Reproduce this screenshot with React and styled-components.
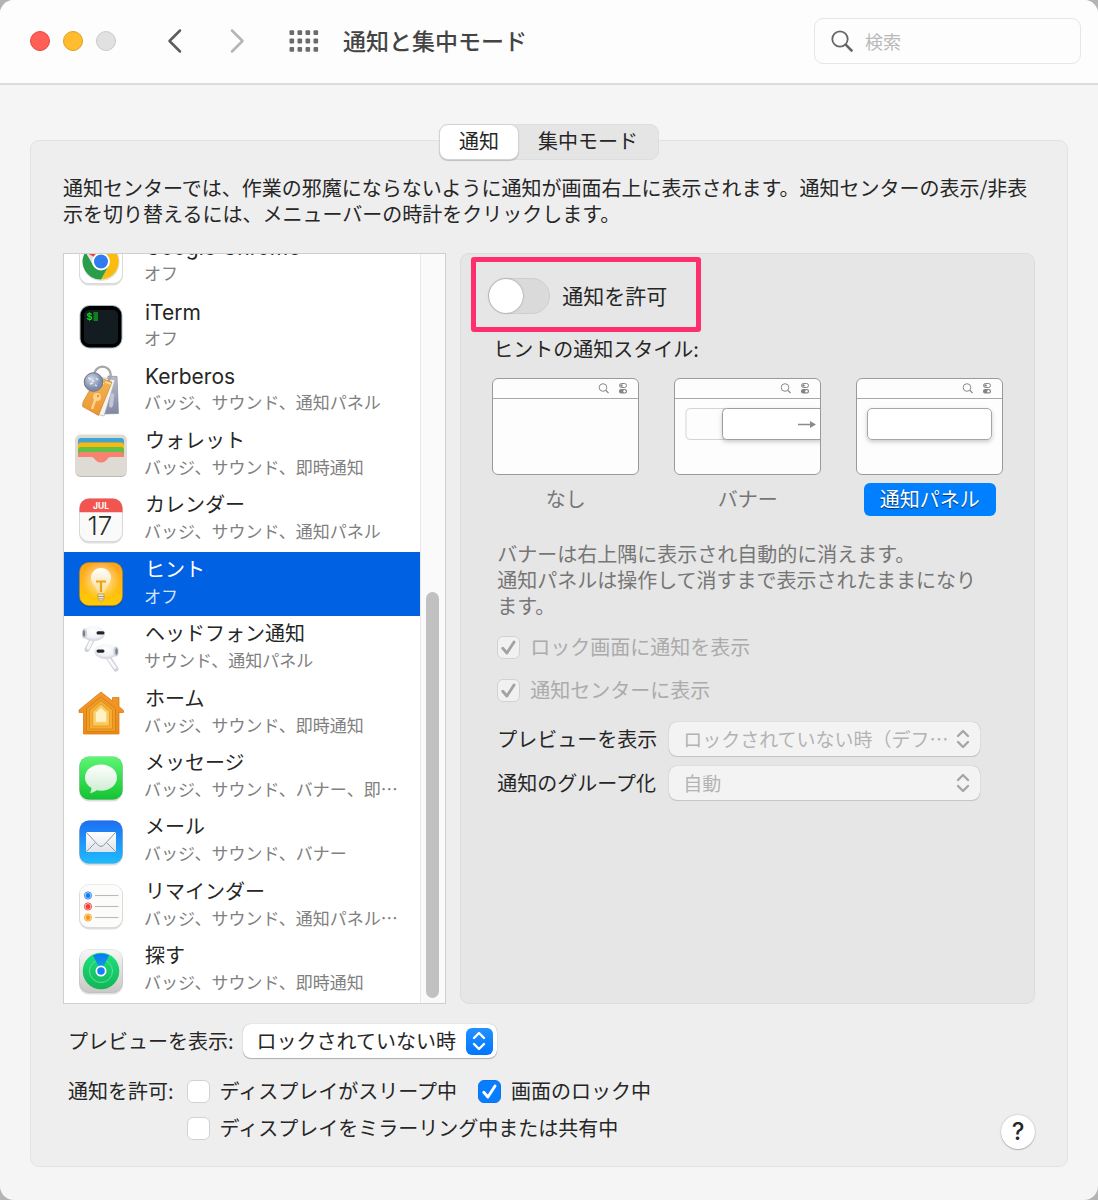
import React from 'react'
import styled, { createGlobalStyle } from 'styled-components'

const apps = [
  { name: 'Google Chrome', detail: 'オフ', icon: <ChromeIcon />, latin: true },
  { name: 'iTerm', detail: 'オフ', icon: <ItermIcon />, latin: true },
  { name: 'Kerberos', detail: 'バッジ、サウンド、通知パネル', icon: <KerberosIcon />, latin: true },
  { name: 'ウォレット', detail: 'バッジ、サウンド、即時通知', icon: <WalletIcon /> },
  { name: 'カレンダー', detail: 'バッジ、サウンド、通知パネル', icon: <CalendarIcon /> },
  { name: 'ヒント', detail: 'オフ', icon: <TipsIcon />, selected: true },
  { name: 'ヘッドフォン通知', detail: 'サウンド、通知パネル', icon: <HeadphoneIcon /> },
  { name: 'ホーム', detail: 'バッジ、サウンド、即時通知', icon: <HomeIcon /> },
  { name: 'メッセージ', detail: 'バッジ、サウンド、バナー、即…', icon: <MessagesIcon /> },
  { name: 'メール', detail: 'バッジ、サウンド、バナー', icon: <MailIcon /> },
  { name: 'リマインダー', detail: 'バッジ、サウンド、通知パネル…', icon: <RemindersIcon /> },
  { name: '探す', detail: 'バッジ、サウンド、即時通知', icon: <FindIcon /> },
]

const alertStyles = [
  { id: 'none', label: 'なし' },
  { id: 'banner', label: 'バナー' },
  { id: 'alert', label: '通知パネル' },
]

function App() {
  return (
    <Desktop>
      <GlobalStyle />
      <Window>
        <TitleBar>
          <Lights>
            <Light $color="#ff5f57" $edge="#e2493f" aria-label="閉じる" />
            <Light $color="#febc2e" $edge="#e0a11d" aria-label="しまう" />
            <Light $color="#e1e1e1" $edge="#cbcbcb" aria-label="拡大" disabled />
          </Lights>
          <Nav>
            <IconButton aria-label="戻る">
              <svg width="16" height="26" viewBox="0 0 16 26">
                <path d="M13 2.500L2.500 13L13 23.500" stroke="#5c5c5c" />
              </svg>
            </IconButton>
            <IconButton aria-label="進む" disabled>
              <svg width="16" height="26" viewBox="0 0 16 26">
                <path d="M3 2.500L13.500 13L3 23.500" stroke="#b5b5b5" />
              </svg>
            </IconButton>
          </Nav>
          <IconButton aria-label="すべてを表示">
            <svg width="30" height="22" viewBox="0 0 30 22">
              {[0, 8.3, 16.6].map(y =>
                [0.5, 8.5, 16.5, 24.5].map(x => (
                  <rect key={`${x}-${y}`} x={x} y={y + 0.3} width="4.600" height="4.800" rx="1" fill="#6b6b6b" />
                ))
              )}
            </svg>
          </IconButton>
          <Heading>通知と集中モード</Heading>
          <Search>
            <svg width="22" height="22" viewBox="0 0 22 22">
              <circle cx="9" cy="9" r="7.700" />
              <path d="M14.700 14.700L20.500 20.500" strokeWidth="2.600" />
            </svg>
            <input type="search" placeholder="検索" aria-label="検索" />
          </Search>
        </TitleBar>

        <Content>
          <Tabs role="tablist">
            <Tab role="tab" aria-selected="true" $active>通知</Tab>
            <Tab role="tab" aria-selected="false">集中モード</Tab>
          </Tabs>

          <Panel>
            <Intro>
              通知センターでは、作業の邪魔にならないように通知が画面右上に表示されます。通知センターの表示/非表示を切り替えるには、メニューバーの時計をクリックします。
            </Intro>

            <Columns>
              <ListFrame>
                <ListView>
                  <AppList>
                    {apps.map(app => (
                      <li key={app.name}>
                        <AppRow $selected={app.selected}>
                          {app.icon}
                          <AppText>
                            <AppName $latin={app.latin}>{app.name}</AppName>
                            <AppDetail $selected={app.selected}>{app.detail}</AppDetail>
                          </AppText>
                        </AppRow>
                      </li>
                    ))}
                  </AppList>
                </ListView>
                <ScrollTrack>
                  <ScrollThumb />
                </ScrollTrack>
              </ListFrame>

              <Settings>
                <Highlight>
                  <Switch type="checkbox" role="switch" id="allow" />
                  <label htmlFor="allow">通知を許可</label>
                </Highlight>

                <Styles>
                  <legend>ヒントの通知スタイル:</legend>
                  <StyleOptions>
                    {alertStyles.map(item => (
                      <StyleOption key={item.id}>
                        <input type="radio" name="style" defaultChecked={item.id === 'alert'} />
                        <StylePreview kind={item.id} />
                        <span>{item.label}</span>
                      </StyleOption>
                    ))}
                  </StyleOptions>
                </Styles>

                <Options>
                  <Note>
                    バナーは右上隅に表示され自動的に消えます。
                    <br />
                    通知パネルは操作して消すまで表示されたままになります。
                  </Note>
                  <Checks>
                    <Check label="ロック画面に通知を表示" checked disabled />
                    <Check label="通知センターに表示" checked disabled />
                  </Checks>
                  <Fields>
                    <label htmlFor="app-preview">プレビューを表示</label>
                    <Popup id="app-preview" value="ロックされていない時（デフ…" disabled />
                    <label htmlFor="grouping">通知のグループ化</label>
                    <Popup id="grouping" value="自動" disabled />
                  </Fields>
                </Options>
              </Settings>
            </Columns>

            <Footer>
              <FooterRow>
                <label htmlFor="preview">プレビューを表示:</label>
                <Popup id="preview" value="ロックされていない時" />
              </FooterRow>
              <AllowRow>
                <span>通知を許可:</span>
                <AllowChecks>
                  <div>
                    <Check label="ディスプレイがスリープ中" />
                    <Check label="画面のロック中" checked />
                  </div>
                  <div>
                    <Check label="ディスプレイをミラーリング中または共有中" />
                  </div>
                </AllowChecks>
                <Help aria-label="ヘルプ">?</Help>
              </AllowRow>
            </Footer>
          </Panel>
        </Content>
      </Window>
    </Desktop>
  )
}

export default App

function Check({ label, checked, disabled }) {
  return (
    <CheckLabel $disabled={disabled}>
      <CheckMark $on={checked && !disabled} $disabled={disabled}>
        <input type="checkbox" defaultChecked={checked} disabled={disabled} />
        {checked && (
          <svg width="23" height="23" viewBox="0 0 24 24">
            <path d="M6 12.800L10.300 17.800L17.800 6.300" stroke={disabled ? '#a3a3a3' : '#fff'} />
          </svg>
        )}
      </CheckMark>
      {label}
    </CheckLabel>
  )
}

function Popup({ id, value, disabled }) {
  return (
    <PopupBox $disabled={disabled}>
      <select id={id} disabled={disabled}>
        <option>{value}</option>
      </select>
      <Arrows $disabled={disabled}>
        <svg width="14" height="20" viewBox="0 0 14 20">
          <path d="M2 7L7 2L12 7M2 13L7 18L12 13" />
        </svg>
      </Arrows>
    </PopupBox>
  )
}

function StylePreview({ kind }) {
  return (
    <svg width="147" height="97" viewBox="0 0 147 97" fill="none">
      <defs>
        <filter id={`shade-${kind}`} x="-10%" y="-20%" width="120%" height="160%">
          <feDropShadow dx="0" dy="2" stdDeviation="2" floodOpacity="0.2" />
        </filter>
        <clipPath id={`clip-${kind}`}>
          <rect x="1" y="1" width="145" height="95" rx="5" />
        </clipPath>
      </defs>
      <rect x="0.500" y="0.500" width="146" height="96" rx="5.500" fill="#fdfdfd" stroke="#9a9a9a" />
      <path d="M1 20.500H146" stroke="#a8a8a8" />
      <circle cx="111" cy="9.500" r="3.800" stroke="#8b8b8b" />
      <path d="M114 12.500L116.500 15" stroke="#8b8b8b" strokeWidth="1.300" />
      <rect x="127.500" y="5.500" width="7" height="4" rx="2" stroke="#858585" />
      <circle cx="129.500" cy="7.500" r="1.200" fill="#858585" />
      <rect x="127" y="11" width="8" height="4.500" rx="2" fill="#858585" />
      <circle cx="132.500" cy="13.200" r="1.200" fill="#fff" />
      {kind === 'banner' && (
        <g clipPath="url(#clip-banner)">
          <rect x="12" y="30.500" width="60" height="31" rx="4" fill="#fdfdfd" stroke="#d4d4d4" />
          <rect x="48.500" y="30.500" width="120" height="31" rx="4" fill="#fff" stroke="#9e9e9e" filter="url(#shade-banner)" />
          <path d="M124 46.500H137" stroke="#8b8b8b" strokeWidth="1.300" />
          <path d="M136 43L142 46.500L136 50Z" fill="#8b8b8b" />
        </g>
      )}
      {kind === 'alert' && (
        <rect x="11.500" y="30.500" width="124" height="31" rx="4.500" fill="#fff" stroke="#a6a6a6" filter="url(#shade-alert)" />
      )}
    </svg>
  )
}

function AppIcon({ children }) {
  return (
    <svg width="52" height="54" viewBox="0 -1 52 54" fill="none" aria-hidden="true">
      {children}
    </svg>
  )
}

function Tile({ fill, edge = '#00000022' }) {
  return (
    <>
      <rect x="4" y="5.500" width="44" height="44" rx="10" fill="#000" opacity="0.130" />
      <rect x="4.500" y="4.500" width="43" height="43" rx="9.500" fill={fill} stroke={edge} strokeWidth="0.600" />
    </>
  )
}

function Gradient({ id, from, to }) {
  return (
    <linearGradient id={id} x1="0" y1="0" x2="0" y2="1">
      <stop stopColor={from} />
      <stop offset="1" stopColor={to} />
    </linearGradient>
  )
}

function ChromeIcon() {
  return (
    <AppIcon>
      <Tile fill="#fff" />
      <circle cx="26" cy="26.500" r="18.500" fill="#000" opacity="0.120" />
      <path d="M26 25L10.400 16A18 18 0 0 1 41.600 16Z" fill="#ea4335" />
      <path d="M26 17H41.600A18 18 0 0 1 26 43.500L33.800 29.500Z" fill="#fbbc12" />
      <path d="M18.200 29.500L10.400 16A18 18 0 0 0 26 43.500L33.800 29.500Z" fill="#2a9d48" />
      <circle cx="26" cy="25.500" r="9" fill="#fff" />
      <circle cx="26" cy="25.500" r="7" fill="#2f7bef" />
    </AppIcon>
  )
}

function ItermIcon() {
  return (
    <AppIcon>
      <rect x="4.500" y="4" width="43" height="43.500" rx="10" fill="#a9bcc2" />
      <rect x="5.500" y="5" width="41" height="41.500" rx="9" fill="#000" />
      <rect x="9" y="9" width="34" height="34" rx="5" fill="#131d21" />
      <text x="11.500" y="19" fontFamily="Liberation Mono" fontWeight="700" fontSize="10" fill="#19d526">$</text>
      <rect x="18.500" y="11" width="4.500" height="9" fill="#0d7f1d" />
    </AppIcon>
  )
}

function KerberosIcon() {
  return (
    <AppIcon>
      <defs>
        <Gradient id="kerb-card" from="#f2b654" to="#ee9530" />
        <Gradient id="kerb-back" from="#b7bccb" to="#8287a5" />
        <radialGradient id="kerb-ball" cx="0.400" cy="0.350">
          <stop stopColor="#d3dcea" />
          <stop offset="1" stopColor="#7e8cae" />
        </radialGradient>
      </defs>
      <path d="M33 11L42 11.500L43.500 48.500L27 49Z" fill="url(#kerb-back)" stroke="#7b7f96" strokeWidth="0.600" />
      <path d="M39 32a2.500 2.500 0 1 0-4 0l-1 9 2 2 2-2z" fill="#c3c6d4" />
      <path d="M25 12L40 15L29 51L21 49Z" fill="#f4f3ef" stroke="#aaa" strokeWidth="0.600" />
      <circle cx="27.500" cy="10" r="8.300" stroke="#a5a5aa" strokeWidth="2.200" />
      <path d="M22 12L37 17L23.500 50.500L7.500 41.500L8 37Z" fill="url(#kerb-card)" stroke="#c07a28" strokeWidth="0.600" />
      <path d="M29 19L22 15M30.500 17L36 19" stroke="#fbe1a5" strokeWidth="1.400" />
      <circle cx="22" cy="32" r="4" fill="#fbd391" />
      <circle cx="23" cy="31" r="1.200" fill="#e99333" />
      <path d="M20.500 34L17 44" stroke="#fbd391" strokeWidth="2.400" />
      <circle cx="18.500" cy="17" r="9.300" fill="url(#kerb-ball)" stroke="#707680" />
      <path d="M13 13l3 1M15 19l3-1M21 13l2 2M20 20l2 1M17 16h2" stroke="#fff" strokeWidth="1.600" opacity="0.700" />
    </AppIcon>
  )
}

function WalletIcon() {
  return (
    <AppIcon>
      <rect x="0.500" y="6" width="51" height="42" rx="5" fill="#bdbbb7" />
      <rect x="0.500" y="5.500" width="51" height="41.500" rx="5" fill="#dedbd4" />
      <path d="M3 12q0-3 3-3h40q3 0 3 3v9H3z" fill="#41a5d3" />
      <path d="M3 17q0-3.500 3-3.500h40q3 0 3 3.500v6H3z" fill="#fdb90b" />
      <path d="M3 21q0-3 3-3h40q3 0 3 3v5H3z" fill="#62c144" />
      <path d="M3 26q0-3 3-3h40q3 0 3 3v2H36c-4 0-4 5.500-10 5.500S20 28 16 28H3z" fill="#f78271" />
    </AppIcon>
  )
}

function CalendarIcon() {
  return (
    <AppIcon>
      <Tile fill="#fafafa" />
      <path d="M4.500 18.300V14A9.500 9.500 0 0 1 14 4.500H38A9.500 9.500 0 0 1 47.500 14V18.300Z" fill="#f2544f" />
      <text x="26" y="14.500" textAnchor="middle" fontFamily="Inter" fontWeight="700" fontSize="8.500" fill="#fff">JUL</text>
      <text x="25" y="40.500" textAnchor="middle" fontFamily="Inter" fontWeight="300" fontSize="26" fill="#2c2c2c">17</text>
    </AppIcon>
  )
}

function TipsIcon() {
  return (
    <AppIcon>
      <defs>
        <Gradient id="tips-bg" from="#ffa21f" to="#ffcc05" />
        <radialGradient id="tips-glow">
          <stop stopColor="#fff" stopOpacity="0.750" />
          <stop offset="1" stopColor="#fff" stopOpacity="0" />
        </radialGradient>
        <Gradient id="tips-bulb" from="#fff" to="#f8dd9a" />
      </defs>
      <Tile fill="url(#tips-bg)" edge="#c98700" />
      <circle cx="26" cy="22" r="19" fill="url(#tips-glow)" />
      <path d="M26 10C20 10 16 14.500 16 20C16 26 22 29 22.800 35H29.200C30 29 36 26 36 20C36 14.500 32 10 26 10Z" fill="url(#tips-bulb)" />
      <path d="M21 23.500H31M26 23.500V34" stroke="#eda20f" strokeWidth="2.200" />
      <path d="M23 36H29V40.500L27.500 43H24.500L23 40.500Z" fill="#eee5ce" stroke="#a98842" strokeWidth="0.600" />
      <path d="M23 38.500H29M23.500 40.800H28.500" stroke="#9e8555" strokeWidth="0.800" />
    </AppIcon>
  )
}

function HeadphoneIcon() {
  return (
    <AppIcon>
      <defs>
        <radialGradient id="pod" cx="0.500" cy="0.350" r="0.600">
          <stop stopColor="#fff" />
          <stop offset="0.700" stopColor="#f2f3f6" />
          <stop offset="1" stopColor="#d5d8df" />
        </radialGradient>
      </defs>
      <path d="M17.500 16L12 26.500" stroke="#cdd1d8" strokeWidth="5" strokeLinecap="round" />
      <path d="M17.800 15L13 25" stroke="#f7f8fa" strokeWidth="3" strokeLinecap="round" />
      <path d="M33 34L41 46" stroke="#cdd1d8" strokeWidth="5" strokeLinecap="round" />
      <path d="M32.500 34L40 44.500" stroke="#f7f8fa" strokeWidth="3" strokeLinecap="round" />
      <ellipse cx="18.500" cy="10.500" rx="11.500" ry="7.500" fill="url(#pod)" />
      <ellipse cx="9.500" cy="10.500" rx="2.600" ry="5" fill="#cfd3da" />
      <ellipse cx="9" cy="10.500" rx="1.200" ry="3.200" fill="#7a808c" />
      <rect x="21.500" y="8.300" width="8" height="3.200" rx="1.600" fill="#22252b" />
      <ellipse cx="31" cy="28.500" rx="11.500" ry="7.500" fill="url(#pod)" />
      <ellipse cx="41" cy="28.500" rx="2.600" ry="5" fill="#cfd3da" />
      <ellipse cx="41.500" cy="28.500" rx="1.200" ry="3.200" fill="#7a808c" />
      <rect x="21.500" y="26.500" width="8" height="3.200" rx="1.600" fill="#22252b" />
    </AppIcon>
  )
}

function HomeIcon() {
  return (
    <AppIcon>
      <defs>
        <Gradient id="home-bg" from="#f5972c" to="#f08a12" />
      </defs>
      <path d="M26 5L37.500 14V10.500H44V19.500L48.500 23.500V25.500H44V47H8.500V25.500H4V23Z" fill="url(#home-bg)" stroke="#cf7410" strokeWidth="0.700" />
      <path d="M26 10L40.500 21.500V44.500H11.500V21.500Z" fill="#f09d26" stroke="#d07c12" strokeWidth="0.800" />
      <path d="M26 13.500L37.500 23V42H14.500V23Z" fill="#f7ad35" stroke="#d98614" strokeWidth="0.800" />
      <path d="M26 17L34.500 24.500V39H17.500V24.500Z" fill="#fbc558" stroke="#e39c2b" strokeWidth="0.800" />
      <path d="M26 20L32 25.500V35.500H20V25.500Z" fill="#fff3c4" stroke="#f6cf6e" strokeWidth="1.600" />
    </AppIcon>
  )
}

function MessagesIcon() {
  return (
    <AppIcon>
      <defs>
        <Gradient id="msg-bg" from="#5df675" to="#12c331" />
        <Gradient id="msg-bubble" from="#fff" to="#cdeccf" />
      </defs>
      <Tile fill="url(#msg-bg)" />
      <path d="M26 12.500C17 12.500 10 18 10 25.500C10 30 12.500 33.500 16.500 36C16.500 38 15.500 39.800 15 41C17.500 40.800 20 39.500 21.500 38.200C23 38.500 24.500 38.700 26 38.700C35 38.700 42 33 42 25.500C42 18 35 12.500 26 12.500Z" fill="url(#msg-bubble)" />
    </AppIcon>
  )
}

function MailIcon() {
  return (
    <AppIcon>
      <defs>
        <Gradient id="mail-bg" from="#1e6ff2" to="#1fbcfd" />
        <Gradient id="mail-env" from="#fff" to="#dfe3e8" />
      </defs>
      <Tile fill="url(#mail-bg)" />
      <rect x="11" y="16" width="30" height="20" rx="1.500" fill="url(#mail-env)" />
      <path d="M11.500 16.500L23.500 29.500Q26 31.500 28.500 29.500L40.500 16.500M11.500 35.500L20.500 26.500M40.500 35.500L31.500 26.500" stroke="#8e99a5" />
    </AppIcon>
  )
}

function RemindersIcon() {
  return (
    <AppIcon>
      <Tile fill="#fcfcfb" />
      {[[15.5, '#157df3'], [26.5, '#ee3f35'], [37.5, '#f79a12']].map(([y, color]) => (
        <g key={color}>
          <circle cx="13" cy={y} r="3.600" stroke={color} strokeWidth="0.900" />
          <circle cx="13" cy={y} r="2.500" fill={color} />
          <path d={`M20 ${y}H43.500`} stroke="#b9b9be" strokeWidth="1.100" />
        </g>
      ))}
    </AppIcon>
  )
}

function FindIcon() {
  return (
    <AppIcon>
      <defs>
        <Gradient id="find-bg" from="#f7f7f6" to="#c9c8c5" />
        <Gradient id="find-disc" from="#1fe07f" to="#14b555" />
        <Gradient id="find-beam" from="#0a77f5" to="#10a8d8" />
      </defs>
      <Tile fill="url(#find-bg)" />
      <circle cx="26" cy="26" r="18.300" fill="url(#find-disc)" />
      <circle cx="26" cy="26" r="11.500" stroke="#5eea9f" strokeWidth="0.900" />
      <path d="M26 26L18 10.500A18 18 0 0 1 34 10.500Z" fill="url(#find-beam)" />
      <circle cx="26" cy="26" r="5.500" fill="#fff" />
      <circle cx="26" cy="26" r="3.800" fill="#1480f5" />
    </AppIcon>
  )
}

const GlobalStyle = createGlobalStyle`
  * {
    box-sizing: border-box;
  }
  body {
    margin: 0;
    background: #b4b4b4;
  }
  body, button, input, select {
    font-family: "Noto Sans CJK JP", sans-serif;
    font-size: 20px;
    line-height: 26px;
    color: #262626;
  }
  button {
    border: 0;
    padding: 0;
    background: none;
  }
`;
const Desktop = styled.div`
  min-height: 100vh;
`;
const Window = styled.main`
  min-height: 100vh;
  background: #f5f5f5;
  border-radius: 14px;
  overflow: hidden;
`;
const TitleBar = styled.header`
  display: flex;
  align-items: center;
  height: 85px;
  padding: 0 17px 2px 30px;
  background: #fdfdfd;
  border-bottom: 2px solid #dcdcdc;
`;
const Lights = styled.div`
  display: flex;
  gap: 13px;
`;
const Light = styled.button`
  width: 20px;
  height: 20px;
  border-radius: 50%;
  background: ${({ $color }) => $color};
  border: 1px solid ${({ $edge }) => $edge};
`;
const Nav = styled.div`
  display: flex;
  gap: 46px;
  margin: 0 44px 0 51px;
`;
const IconButton = styled.button`
  display: flex;
  path {
    fill: none;
    stroke-width: 2.5;
    stroke-linecap: round;
    stroke-linejoin: round;
  }
`;
const Heading = styled.h1`
  flex: 1;
  margin: 0 0 0 24px;
  padding-bottom: 2px;
  font-size: 23px;
  font-weight: 500;
  color: #444;
`;
const Search = styled.label`
  display: flex;
  align-items: center;
  gap: 12px;
  width: 267px;
  height: 46px;
  padding: 0 16px;
  border: 1px solid #e6e6e6;
  border-radius: 9px;
  svg {
    flex: none;
    fill: none;
    stroke: #666;
    stroke-width: 1.8;
    stroke-linecap: round;
  }
  input {
    width: 100%;
    padding: 0;
    border: 0;
    background: none;
    font-size: 18px;
  }
  input::placeholder {
    color: #b9b9b9;
  }
`;
const Content = styled.div`
  display: flex;
  flex-direction: column;
  padding: 39px 30px 33px;
`;
const Tabs = styled.div`
  z-index: 1;
  align-self: center;
  display: flex;
  height: 36px;
  margin-bottom: -20px;
  background: #e5e5e5;
  border: 1px solid #dedede;
  border-radius: 9px;
`;
const Tab = styled.button`
  margin: -1px;
  padding: 0 ${({ $active }) => ($active ? 19 : 21)}px 2px;
  border-radius: 9px;
  ${({ $active }) => $active && `
    background: #fff;
    border: 1px solid #d3d3d3;
    box-shadow: 0 1px 1px rgba(0, 0, 0, 0.2);
  `}
`;
const Panel = styled.section`
  padding: 34px 32px 17px;
  background: #eee;
  border: 1px solid #e2e2e2;
  border-radius: 9px;
`;
const Intro = styled.p`
  margin: 0 0 26px;
`;
const Columns = styled.div`
  display: grid;
  grid-template-columns: 2fr 3fr;
  gap: 14px;
  height: 751px;
`;
const ListFrame = styled.div`
  display: flex;
  min-width: 0;
  min-height: 0;
  background: #fff;
  border: 1px solid #cfcfcf;
`;
const ListView = styled.div`
  flex: 1;
  min-width: 0;
  display: flex;
  flex-direction: column;
  justify-content: flex-end;
  overflow: hidden;
`;
const AppList = styled.ul`
  flex: none;
  display: grid;
  grid-template-rows: repeat(12, 1fr);
  height: 773px;
  margin: 0;
  padding: 0;
  list-style: none;
`;
const AppRow = styled.button`
  display: flex;
  align-items: center;
  gap: 17px;
  width: 100%;
  height: 100%;
  padding: 0 11px;
  text-align: left;
  white-space: nowrap;
  background: ${({ $selected }) => ($selected ? '#0062e3' : 'transparent')};
  color: ${({ $selected }) => ($selected ? '#fff' : '#262626')};
  svg {
    flex: none;
  }
`;
const AppText = styled.span`
  display: flex;
  flex-direction: column;
  padding-bottom: 4px;
`;
const AppName = styled.span`
  padding-left: 1px;
  font-family: Inter, "Noto Sans CJK JP", sans-serif;
  font-size: ${({ $latin }) => ($latin ? 21 : 20)}px;
  line-height: ${({ $latin }) => ($latin ? 26 : 27)}px;
`;
const AppDetail = styled.span`
  font-size: 17px;
  line-height: 24px;
  color: ${({ $selected }) => ($selected ? '#d5e4fa' : '#808080')};
`;
const ScrollTrack = styled.div`
  display: flex;
  align-items: flex-end;
  width: 25px;
  padding: 5px;
  background: #fafafa;
  border-left: 1px solid #e8e8e8;
`;
const ScrollThumb = styled.div`
  width: 13px;
  height: 55%;
  border-radius: 7px;
  background: #c1c1c1;
`;
const Settings = styled.div`
  min-width: 0;
  padding: 3px 10px;
  background: #e6e6e6;
  border: 1px solid #dcdcdc;
  border-radius: 9px;
`;
const Highlight = styled.div`
  display: flex;
  align-items: center;
  gap: 12px;
  width: fit-content;
  height: 75px;
  padding: 2px 29px 0 12px;
  border: 5px solid #ff2f6d;
  border-radius: 3px;
  font-size: 21px;
  label {
    padding-bottom: 2px;
  }
`;
const Switch = styled.input`
  appearance: none;
  display: flex;
  width: 62px;
  height: 36px;
  margin: 0;
  background: #dadada;
  border: 1px solid #cecece;
  border-radius: 18px;
  &::before {
    content: "";
    width: 34px;
    height: 34px;
    border-radius: 50%;
    background: #fff;
    box-shadow: 0 0 2px rgba(0, 0, 0, 0.4);
  }
`;
const Styles = styled.fieldset`
  margin: 0;
  padding: 16px 21px 0;
  border: 0;
  legend {
    padding: 4px 1px 0;
  }
`;
const StyleOptions = styled.div`
  display: flex;
  gap: 35px;
`;
const StyleOption = styled.label`
  display: flex;
  flex-direction: column;
  align-items: center;
  gap: 8px;
  color: #767676;
  input {
    position: absolute;
    opacity: 0;
  }
  span {
    padding: 3px 16px 4px;
    border-radius: 6px;
  }
  input:checked ~ span {
    background: #007fff;
    color: #fff;
    text-shadow: 0 1px 1px rgba(0, 0, 0, 0.6);
  }
`;
const Options = styled.div`
  padding: 25px 44px 0 26px;
`;
const Note = styled.p`
  margin: 0;
  color: #767676;
`;
const Checks = styled.div`
  display: grid;
  gap: 17px;
  margin: 15px 0 19px;
`;
const CheckLabel = styled.label`
  display: flex;
  align-items: center;
  gap: 10px;
  color: ${({ $disabled }) => ($disabled ? '#ababab' : '#262626')};
`;
const CheckMark = styled.span`
  display: grid;
  width: 23px;
  height: 23px;
  input, svg {
    grid-area: 1 / 1;
  }
  input {
    appearance: none;
    width: 23px;
    height: 23px;
    margin: 0;
    border-radius: 6px;
    border: 1px solid ${({ $on }) => ($on ? '#0a74ea' : '#d2d2d2')};
    background: ${({ $on, $disabled }) => ($on ? '#087dff' : $disabled ? '#f1f1f1' : '#fff')};
  }
  path {
    fill: none;
    stroke-width: 3;
    stroke-linecap: round;
    stroke-linejoin: round;
  }
`;
const Fields = styled.div`
  display: grid;
  grid-template-columns: auto minmax(0, 1fr);
  align-items: center;
  gap: 10px 12px;
`;
const PopupBox = styled.div`
  display: grid;
  align-items: center;
  height: 34px;
  background: ${({ $disabled }) => ($disabled ? '#f3f3f3' : '#fff')};
  border-radius: 8px;
  box-shadow: 0 0 1px rgba(0, 0, 0, 0.3), 0 1px 1px rgba(0, 0, 0, ${({ $disabled }) => ($disabled ? 0.12 : 0.25)});
  select {
    grid-area: 1 / 1;
    appearance: none;
    width: 100%;
    padding: 0 ${({ $disabled }) => ($disabled ? 28 : 40)}px 0 14px;
    border: 0;
    background: none;
    font-size: ${({ $disabled }) => ($disabled ? 19 : 20)}px;
    color: ${({ $disabled }) => ($disabled ? '#b3b3b3' : '#262626')};
    opacity: 1;
  }
`;
const Arrows = styled.span`
  grid-area: 1 / 1;
  justify-self: end;
  display: grid;
  place-items: center;
  width: 27px;
  height: 27px;
  margin-right: 4px;
  border-radius: 6px;
  background: ${({ $disabled }) => ($disabled ? 'none' : 'linear-gradient(#2391ff, #0076ff)')};
  pointer-events: none;
  path {
    fill: none;
    stroke: ${({ $disabled }) => ($disabled ? '#a6a6a6' : '#fff')};
    stroke-width: 2.4;
    stroke-linecap: round;
    stroke-linejoin: round;
  }
`;
const Footer = styled.footer`
  padding: 20px 0 0 5px;
`;
const FooterRow = styled.div`
  display: flex;
  align-items: center;
  gap: 9px;
`;
const AllowRow = styled.div`
  display: flex;
  align-items: flex-start;
  gap: 13px;
  margin-top: 20px;
`;
const AllowChecks = styled.div`
  flex: 1;
  display: grid;
  gap: 11px;
  padding-bottom: 8px;
  div {
    display: flex;
    gap: 21px;
  }
`;
const Help = styled.button`
  align-self: flex-end;
  width: 34px;
  height: 34px;
  border-radius: 50%;
  background: #fff;
  box-shadow: 0 0 2px rgba(0, 0, 0, 0.25), 0 1px 1px rgba(0, 0, 0, 0.2);
  font-family: Inter, sans-serif;
  font-size: 24px;
  font-weight: 500;
`;
